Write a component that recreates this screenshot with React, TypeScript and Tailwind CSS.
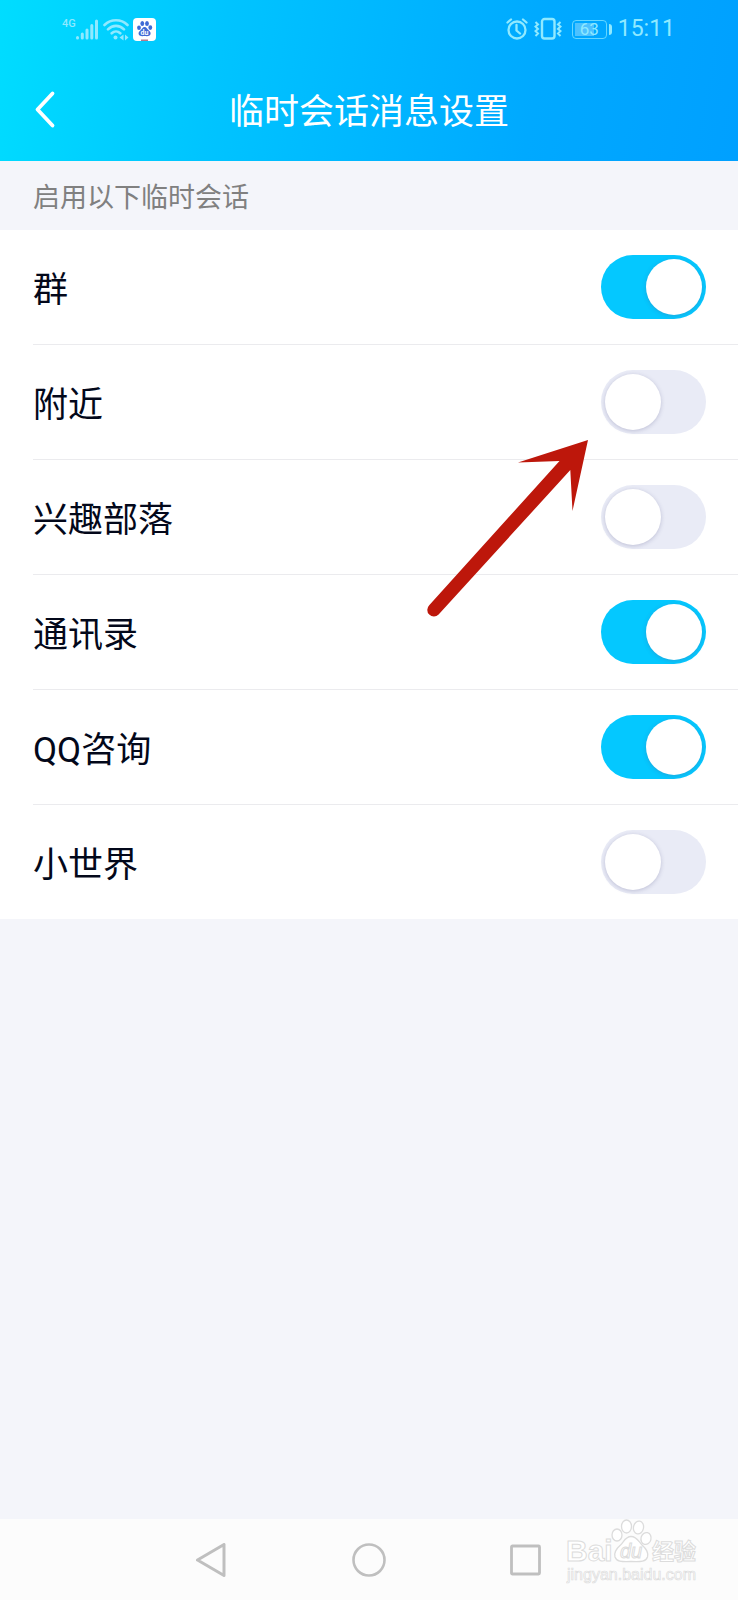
import { useState } from "react";

interface SessionItem {
  id: string;
  label: string;
  enabled: boolean;
}

const initialItems: SessionItem[] = [
  { id: "group", label: "群", enabled: true },
  { id: "nearby", label: "附近", enabled: false },
  { id: "tribe", label: "兴趣部落", enabled: false },
  { id: "contacts", label: "通讯录", enabled: true },
  { id: "consult", label: "QQ咨询", enabled: true },
  { id: "world", label: "小世界", enabled: false },
];

function StatusBar() {
  return (
    <div className="flex h-[58px] items-center justify-between pl-[62px] pr-[63px] text-[#8fe9ff]">
      <div className="flex items-center">
        <span className="self-start text-[11px] leading-[14px] font-medium">4G</span>
        {/* Signal */}
        <svg width="23" height="24" viewBox="0 0 23 24" fill="none" stroke="currentColor" strokeWidth="3" strokeLinecap="round">
          <path d="M1.500 20.500v.5M6.300 17v4M11 13v8M15.800 8.500V21M20.500 4v17" />
        </svg>
        {/* Wifi */}
        <svg className="ml-1" width="26" height="24" viewBox="0 0 26 24" fill="none" stroke="currentColor" strokeWidth="2.600" strokeLinecap="round">
          <path d="M1.500 8c6.500-6.300 16.500-6.300 23 0M5 12.300c4.600-4.600 11.400-4.600 16 0M8.700 16.300c2.600-2.500 6-2.500 8.600 0" />
          <circle cx="12.500" cy="20.500" r="2" fill="currentColor" stroke="none" />
          <path d="M20.500 17.500v6l-4-3zM22 17.500v6l3.500-3z" fill="currentColor" stroke="none" />
        </svg>
        <svg className="ml-1" width="23" height="23" viewBox="0 0 23 23">
          <rect width="23" height="23" rx="4" fill="#fff" />
          <g fill="#3f6bd6">
            <ellipse cx="6" cy="9.800" rx="1.900" ry="2.300" />
            <ellipse cx="9.300" cy="5.600" rx="1.900" ry="2.500" />
            <ellipse cx="14" cy="5.600" rx="1.900" ry="2.500" />
            <ellipse cx="17.300" cy="9.600" rx="1.900" ry="2.300" />
            <path d="M11.600 9c2 0 2.600 2 4 3.300 1.600 1.400 2.500 2.600 1.800 4.300-.7 1.800-3 1.700-5.800 1.500-2.800.2-5.100.3-5.800-1.500-.7-1.700.2-2.900 1.800-4.300C9 11 9.600 9 11.600 9z" />
          </g>
          <text x="11.500" y="17" textAnchor="middle" fontSize="7" fontWeight="700" fill="#fff">du</text>
          <rect x="8" y="21.500" width="7" height="1.500" fill="#b5798c" />
        </svg>
      </div>
      <div className="flex items-center">
        {/* Alarm */}
        <svg width="22" height="24" viewBox="0 0 22 24" fill="none" stroke="currentColor" strokeWidth="2.300" strokeLinecap="round">
          <circle cx="11" cy="13" r="8.500" />
          <path d="M10.500 8v5.500l3.500 3M1.500 5.500 5 2.500M20.500 5.500 17 2.500" />
        </svg>
        {/* Vibrate */}
        <svg className="ml-1.5" width="28" height="24" viewBox="0 0 28 24" fill="none" stroke="currentColor" strokeWidth="2">
          <rect x="8" y="2" width="12.500" height="19.500" rx="2.500" strokeWidth="2.400" />
          <path d="m1.500 5 2.500 2.500-2.500 2 2.500 2.500-2.500 2 2.500 2.500-2.500 2.500M26.500 5 24 7.500l2.500 2L24 12l2.500 2-2.500 2.500 2.500 2.500" />
        </svg>
        <div className="ml-2.5 flex items-center gap-0.5">
          <span className="relative flex h-[19px] w-[35px] items-center justify-center rounded-sm border border-current/70 text-[17px] leading-none">
            <span className="absolute inset-y-0.5 left-0.5 w-[19px] bg-white/30" />
            <span className="relative">63</span>
          </span>
          <span className="h-[11px] w-[3px] rounded-r bg-current" />
        </div>
        <span className="ml-1.5 text-[23px] leading-6">15:11</span>
      </div>
    </div>
  );
}

function Switch({ id, checked, onChange }: { id: string; checked: boolean; onChange: () => void }) {
  return (
    <input
      id={id}
      type="checkbox"
      role="switch"
      checked={checked}
      onChange={onChange}
      className="flex h-16 w-[105px] shrink-0 cursor-pointer appearance-none items-center rounded-full bg-[#e9ebf6] px-1 transition-colors before:size-14 before:rounded-full before:bg-white before:shadow-[0_1px_4px_rgba(90,90,140,0.3)] before:content-[''] checked:justify-end checked:bg-[#04c8ff]"
    />
  );
}

function Watermark() {
  return (
    <svg className="font-['Liberation_Sans','Noto_Sans_CJK_SC',sans-serif]" width="134" height="70" viewBox="0 0 134 70" fill="#fff" stroke="#dcdcdc">
      <g fontWeight="700" strokeWidth="1">
        <text x="0" y="42" fontSize="30">Bai</text>
        <text x="86" y="40" fontSize="22">经验</text>
      </g>
      <g strokeWidth="1.300">
        <ellipse cx="51" cy="16" rx="5" ry="6" />
        <ellipse cx="60.500" cy="7.500" rx="5" ry="6.500" />
        <ellipse cx="72.500" cy="8.500" rx="5" ry="6.500" transform="rotate(12 72.500 8.500)" />
        <ellipse cx="80" cy="19.500" rx="5" ry="6" transform="rotate(15 80 19.500)" />
        <path d="M65 17.500c6 0 7.500 5 11 8.500 4 3.500 7 7 5.500 12-1.500 4.500-6 5-16.500 4.500-10 .5-14.500 0-16-4.500-1.500-5 1.500-8.500 5.500-12 3.500-3.500 5-8.500 10.500-8.500z" />
      </g>
      <text x="65" y="39" textAnchor="middle" fontSize="20" fontStyle="italic" strokeWidth="1">du</text>
      <text x="1" y="61" fontSize="16" strokeWidth="0.700">jingyan.baidu.com</text>
    </svg>
  );
}

export default function App() {
  const [items, setItems] = useState(initialItems);

  const toggle = (id: string) => {
    setItems(items.map((item) => (item.id === id ? { ...item, enabled: !item.enabled } : item)));
  };

  return (
    <div className="flex min-h-screen flex-col bg-[#f4f5fa] font-[Roboto,'Noto_Sans_CJK_SC',sans-serif]">
      <header className="bg-[linear-gradient(100deg,#00ddff,#00c4ff_30%,#00a9ff_72%,#00a0ff)]">
        <StatusBar />
        <div className="grid h-[103px] grid-cols-[80px_1fr_80px] items-center text-white">
          <button type="button" aria-label="返回" className="flex h-16 items-center pl-8">
            <svg width="28" height="40" viewBox="0 0 28 40" fill="none" stroke="currentColor" strokeWidth="3.800" strokeLinecap="round" strokeLinejoin="round">
              <path d="M20.500 3.500 5.500 19.500l15 16" />
            </svg>
          </button>
          <h1 className="pt-1.5 text-center text-[35px] leading-[52px]">临时会话消息设置</h1>
        </div>
      </header>

      <main className="flex-1">
        <h2 className="flex h-[69px] items-center pt-1 pl-[33px] text-[27px] leading-10 text-[#808080]">启用以下临时会话</h2>
        <div className="relative bg-white">
          <ul className="divide-y divide-[#ebebee] pl-[33px]">
            {items.map((item) => (
              <li key={item.id} className="flex h-[115px] items-center justify-between pr-8 last:h-[114px]">
                <label htmlFor={item.id} className="pt-2 text-[35px] leading-[52px] text-[#03081a]">
                  {item.label}
                </label>
                <Switch id={item.id} checked={item.enabled} onChange={() => toggle(item.id)} />
              </li>
            ))}
          </ul>

          {/* Pointer to the 附近 switch */}
          <svg className="pointer-events-none absolute top-[210px] right-[150px]" width="162" height="178" viewBox="0 0 162 178" fill="#bd170b">
            <path d="M162 0 92 22.500 133.500 21 3.200 165.200a6.600 6.600 0 0 0 9.400 9.300L144.300 30l2.200 41z" />
          </svg>
        </div>
      </main>

      <nav className="relative flex h-[81px] items-center justify-center gap-[123px] bg-[#fcfcfc] text-[#bfbfbf]">
        <button type="button" aria-label="后退">
          <svg width="34" height="34" viewBox="0 0 34 34" fill="none" stroke="currentColor" strokeWidth="3" strokeLinejoin="round">
            <path d="M29 1.500v31L2.500 17z" />
          </svg>
        </button>
        <button type="button" aria-label="主页">
          <svg width="34" height="34" viewBox="0 0 34 34" fill="none" stroke="currentColor" strokeWidth="2.600">
            <circle cx="17" cy="17" r="15.500" />
          </svg>
        </button>
        <button type="button" aria-label="最近任务">
          <svg width="34" height="34" viewBox="0 0 34 34" fill="none" stroke="currentColor" strokeWidth="2.800">
            <rect x="2.500" y="3" width="28" height="28" rx="1" />
          </svg>
        </button>
        <div className="absolute top-0 right-[38px]">
          <Watermark />
        </div>
      </nav>
    </div>
  );
}
